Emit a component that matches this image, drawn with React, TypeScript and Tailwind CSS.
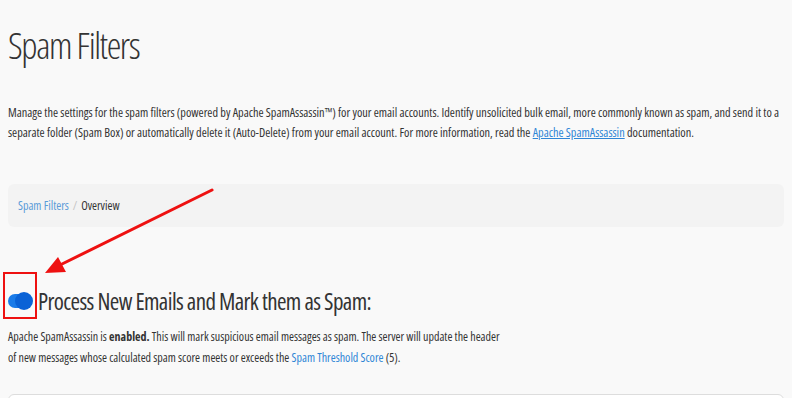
// Spam Filters overview (cPanel) with annotation arrow

const FONT = "font-['Open_Sans',_'Liberation_Sans',_sans-serif] font-stretch-condensed";

function Toggle() {
  return (
    <svg width="25" height="20" viewBox="0 0 25 20" className="shrink-0">
      <rect x="0" y="3" width="20" height="14" rx="7" fill="#1a7be8" />
      <circle cx="16" cy="10" r="9" fill="#0a62d6" />
    </svg>
  );
}

// red annotation drawn over the page
function Annotation() {
  return (
    <>
      <div className="absolute left-[3px] top-[272px] h-[47px] w-[34px] border-2 border-[#ee1111] pointer-events-none" />
      <svg className="absolute left-0 top-0 pointer-events-none" width="792" height="398" viewBox="0 0 792 398">
        <line x1="212" y1="190" x2="58" y2="266" stroke="#ee1111" strokeWidth="3" strokeLinecap="round" />
        <polygon points="45,273 58,257 66,272" fill="#ee1111" />
      </svg>
    </>
  );
}

export default function App() {
  return (
    <div className={`relative w-[792px] h-[398px] overflow-hidden bg-[#f9f9f9] px-2 text-[#333] ${FONT}`}>
      <h1 className="pt-[20px] text-[37px] leading-[50px] font-light tracking-[-1.4px] text-[#333]">Spam Filters</h1>

      <p className="mt-[33px] text-[12.25px] leading-[20px]">
        Manage the settings for the spam filters (powered by Apache SpamAssassin™) for your email accounts. Identify
        unsolicited bulk email, more commonly known as spam, and send it to a separate folder (Spam Box) or automatically
        delete it (Auto-Delete) from your email account. For more information, read the{" "}
        <a className="text-[#2f86d6] underline">Apache SpamAssassin</a> documentation.
      </p>

      <nav className="mt-[41px] h-[43px] flex items-center gap-1 rounded-md bg-[#f3f3f3] px-[10px] text-[12px]">
        <a className="text-[#5a9bd8]">Spam Filters</a>
        <span className="text-[#c4c4c4]">/</span>
        <span className="text-[#333]">Overview</span>
      </nav>

      <div className="mt-[59px] flex h-[30px] items-center gap-[5px]">
        <Toggle />
        <h2 className="text-[23px] leading-[30px] tracking-[-0.6px] text-[#333]">Process New Emails and Mark them as Spam:</h2>
      </div>

      <p className="mt-[10px] w-[500px] text-[12px] leading-[21px]">
        Apache SpamAssassin is <b className="font-bold">enabled.</b> This will mark suspicious email messages as spam. The
        server will update the header of new messages whose calculated spam score meets or exceeds the{" "}
        <a className="text-[#2f86d6]">Spam Threshold Score</a> (5).
      </p>

      <div className="mt-[26px] h-[40px] rounded-t-md border border-[#dddddd] bg-white" />

      <Annotation />
    </div>
  );
}
